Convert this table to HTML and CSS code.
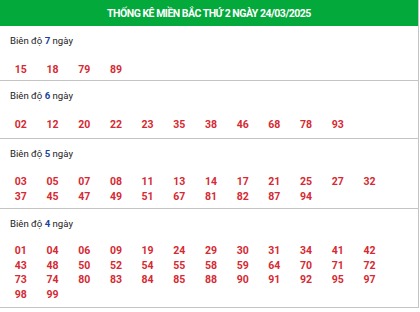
FILE: index.html
```html
<!DOCTYPE html>
<html lang="vi">
<head>
<meta charset="utf-8">
<link rel="stylesheet" href="styles.css">
</head>
<body>
<div class="box">
  <div class="head">THỐNG KÊ MIỀN BẮC THỨ 2 NGÀY 24/03/2025</div>
  <div class="sec s7">
    <div class="lbl">Biên độ <b>7</b> ngày</div>
    <div class="nums"><span>15</span><span>18</span><span>79</span><span>89</span></div>
  </div>
  <div class="sec s6">
    <div class="lbl">Biên độ <b>6</b> ngày</div>
    <div class="nums"><span>02</span><span>12</span><span>20</span><span>22</span><span>23</span><span>35</span><span>38</span><span>46</span><span>68</span><span>78</span><span>93</span></div>
  </div>
  <div class="sec s5">
    <div class="lbl">Biên độ <b>5</b> ngày</div>
    <div class="nums"><span>03</span><span>05</span><span>07</span><span>08</span><span>11</span><span>13</span><span>14</span><span>17</span><span>21</span><span>25</span><span>27</span><span>32</span><span>37</span><span>45</span><span>47</span><span>49</span><span>51</span><span>67</span><span>81</span><span>82</span><span>87</span><span>94</span></div>
  </div>
  <div class="sec s4">
    <div class="lbl">Biên độ <b>4</b> ngày</div>
    <div class="nums"><span>01</span><span>04</span><span>06</span><span>09</span><span>19</span><span>24</span><span>29</span><span>30</span><span>31</span><span>34</span><span>41</span><span>42</span><span>43</span><span>48</span><span>50</span><span>52</span><span>54</span><span>55</span><span>58</span><span>59</span><span>64</span><span>70</span><span>71</span><span>72</span><span>73</span><span>74</span><span>80</span><span>83</span><span>84</span><span>85</span><span>88</span><span>90</span><span>91</span><span>92</span><span>95</span><span>97</span><span>98</span><span>99</span></div>
  </div>
</div>
</body>
</html>
```
FILE: styles.css
```css
html, body { margin: 0; padding: 0; background: #fff; }
body { font-family: Roboto, "Liberation Sans", sans-serif; color: #333; }
.box { width: 418px; border-right: 1px solid #c4c4c4; }
.head {
  height: 26px; background: #03a93a; color: #fff;
  font-weight: bold; font-size: 10.5px; line-height: 27px;
  text-align: center; letter-spacing: -0.5px;
}
.sec { border-bottom: 1px solid #c4c4c4; padding: 9px 0 0 10px; }
.lbl { font-size: 9.6px; line-height: 12px; color: #222; }
.lbl b { color: #1c3f9e; font-weight: bold; }
.nums {
  display: grid; grid-template-columns: repeat(12, 31.7px);
  margin-left: -5px;
  font-size: 10.5px; font-weight: bold; color: #d52a33; line-height: 15px;
}
.nums span { text-align: center; }
.s7 { height: 45px; }
.s7 .nums { margin-top: 15px; }
.s6 { height: 48px; }
.s6 .nums { margin-top: 15px; }
.s5 { height: 60px; }
.s5 .nums { margin-top: 14px; }
.s4 { height: 89px; }
.s4 .nums { margin-top: 14px; line-height: 14.5px; }
```
